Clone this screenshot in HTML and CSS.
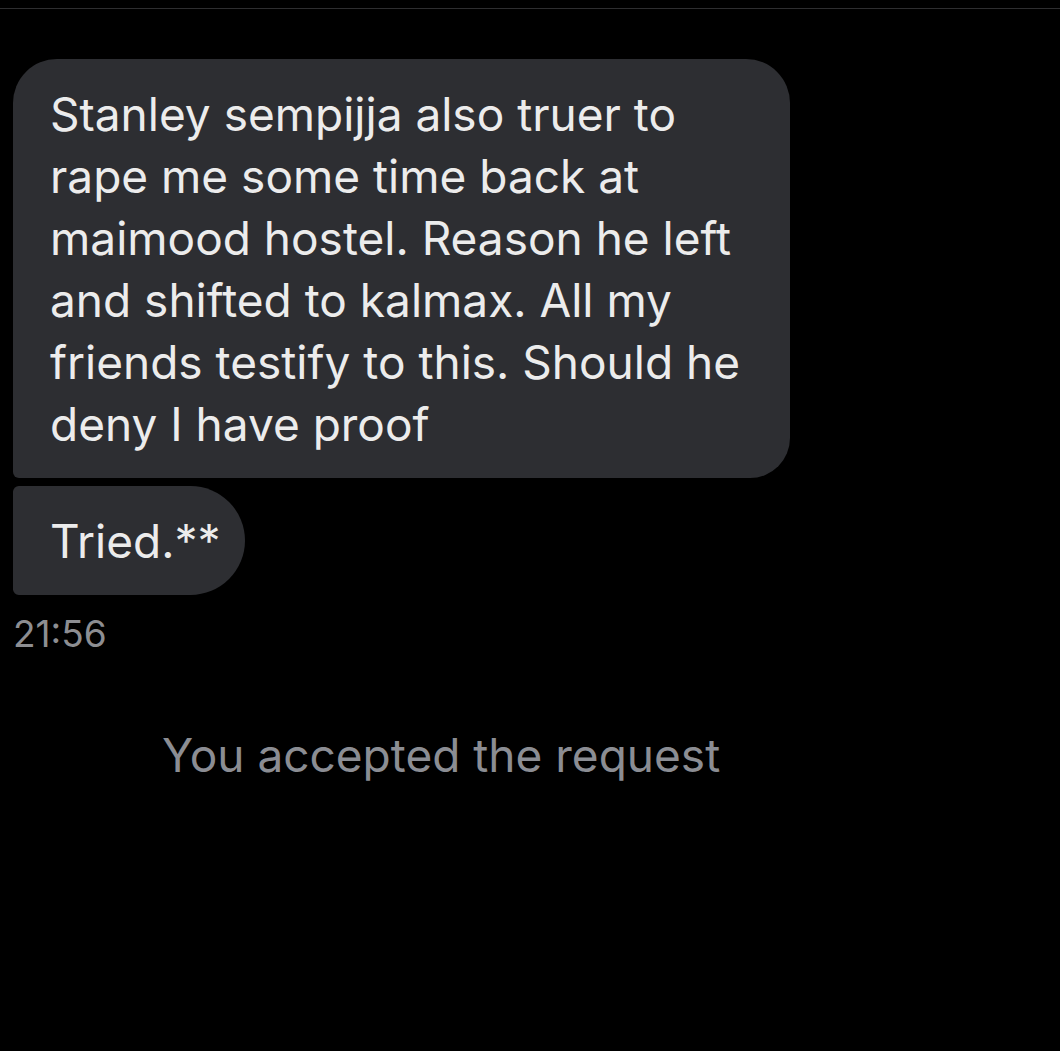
FILE: index.html
```html
<!DOCTYPE html>
<html>
<head>
<meta charset="utf-8">
<link rel="stylesheet" href="styles.css">
</head>
<body>
<div class="screen">
  <div class="topline"></div>
  <div class="thread">
    <div class="bubble first">Stanley sempijja also truer to<br>rape me some time back at<br>maimood hostel. Reason he left<br>and shifted to kalmax. All my<br>friends testify to this. Should he<br>deny I have proof</div>
    <div class="bubble last">Tried.**</div>
    <div class="time">21:56</div>
  </div>
  <div class="notice">You accepted the request</div>
</div>
</body>
</html>
```
FILE: styles.css
```css
html, body {
  margin: 0;
  padding: 0;
  background: #000;
}
.screen {
  width: 1060px;
  height: 1051px;
  background: #000;
  font-family: Inter, Roboto, "Liberation Sans", sans-serif;
  overflow: hidden;
}
.topline {
  margin-top: 8px;
  height: 1px;
  background: #2e2e30;
}
.thread {
  padding: 50px 0 0 13px;
  display: flex;
  flex-direction: column;
  align-items: flex-start;
  gap: 8px;
}
.bubble {
  background: #2d2e32;
  color: #ececec;
  font-size: 46px;
  line-height: 62px;
  white-space: nowrap;
  padding: 24px 37px 23px 37px;
}
.bubble.first {
  width: 703px;
  border-radius: 44px 44px 40px 6px;
}
.bubble.last {
  padding: 24px 24px 23px 37px;
  border-radius: 6px 56px 56px 6px;
}
.time {
  margin-top: 9px;
  color: #8d8e92;
  font-size: 37px;
  line-height: 44px;
}
.notice {
  margin-top: 71px;
  padding-left: 162px;
  color: #8b8d93;
  font-size: 46px;
  line-height: 56px;
}
```
